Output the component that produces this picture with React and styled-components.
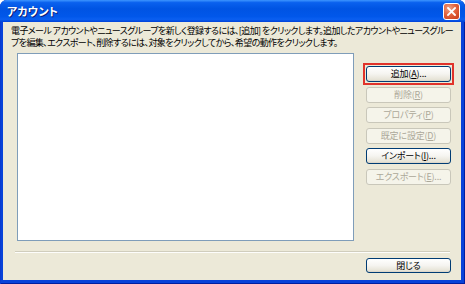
import React from 'react';
import styled, { createGlobalStyle, css } from 'styled-components';

const GlobalStyle = createGlobalStyle`
    html, body {
        margin: 0;
        padding: 0;
        background: #ffffff;
    }
    body {
        font-family: "Noto Sans CJK JP", "Noto Sans", sans-serif;
        font-feature-settings: "palt";
    }
`;

const Window = styled.div`
    width: 465px;
    height: 284px;
    box-sizing: border-box;
    display: flex;
    flex-direction: column;
    background: #0842d9;
    border-radius: 7px 7px 0 0;
    overflow: hidden;
    padding: 0 4px 4px 3px;
    box-shadow: inset 1px 0 0 #0a3bd0, inset -1px 0 0 #001ea0, inset 0 -1px 0 #001ea0;
`;

const TitleBar = styled.div`
    height: 22px;
    margin: 0 -4px 0 -3px;
    padding: 0 5px 0 7px;
    display: flex;
    align-items: center;
    justify-content: space-between;
    background: linear-gradient(to bottom, #3d95ff 0%, #0a61ee 12%, #0054e3 40%, #0157ea 75%, #0a5ff0 88%, #0041d8 100%);
`;

const Title = styled.span`
    color: #fff;
    font-size: 11px;
    font-weight: bold;
    letter-spacing: 0.2px;
    text-shadow: 1px 1px 0 #0a1e78;
`;

const CloseButton = styled.div`
    width: 17px;
    height: 17px;
    margin-top: 1px;
    box-sizing: border-box;
    border: 1px solid #fff;
    border-radius: 3px;
    background: radial-gradient(circle at 35% 30%, #f0a286 0%, #e3643e 45%, #c83a17 100%);
    display: flex;
    align-items: center;
    justify-content: center;
`;

const Body = styled.div`
    flex: 1;
    display: flex;
    flex-direction: column;
    background: #ece9d8;
    padding: 3px 10px 0 8px;
`;

const Description = styled.p`
    margin: 0;
    font-size: 9px;
    line-height: 12px;
    white-space: nowrap;
    color: #000;
    letter-spacing: -0.6px;
`;

const MainRow = styled.div`
    display: flex;
    margin-top: 4px;
`;

const AccountList = styled.div`
    margin-left: 6px;
    width: 337px;
    height: 188px;
    box-sizing: border-box;
    background: #fff;
    border: 1px solid #7f9db9;
`;

const ButtonColumn = styled.div`
    margin-left: 12px;
    padding-top: 13px;
    display: flex;
    flex-direction: column;
    gap: 4.6px;
`;

const Highlight = styled.div`
    margin: -3px;
    padding: 1px;
    border: 2px solid #e0332b;
    display: flex;
`;

const Button = styled.button`
    width: 85px;
    height: 16px;
    box-sizing: border-box;
    padding: 0;
    font-family: inherit;
    font-feature-settings: "palt";
    font-size: 9px;
    line-height: 14px;
    letter-spacing: -0.2px;
    border-radius: 3px;
    border: 1px solid #003c74;
    color: #000;
    background: linear-gradient(to bottom, #ffffff 0%, #f5f4f0 50%, #e6e3d6 90%, #d6d0c5 100%);
    ${p => p.disabled && css`
        border-color: #c9c7ba;
        color: #aca899;
        background: #f5f4ea;
    `}
`;

const Separator = styled.div`
    margin: 10px 1px 0 4px;
    height: 0;
    border-top: 1px solid #d0cdbd;
    border-bottom: 1px solid #fdfdfb;
`;

const Footer = styled.div`
    display: flex;
    justify-content: flex-end;
    margin-top: 5px;
`;

const CloseDialogButton = styled(Button)`
    width: 85px;
    height: 15px;
    line-height: 13px;
`;

export default function App() {
    return (
        <>
            <GlobalStyle />
            <Window>
                <TitleBar>
                    <Title>アカウント</Title>
                    <CloseButton>
                        <svg width="9" height="9" viewBox="0 0 9 9">
                            <path d="M1 1 L8 8 M8 1 L1 8" stroke="#fff" strokeWidth="1.8" strokeLinecap="square" />
                        </svg>
                    </CloseButton>
                </TitleBar>
                <Body>
                    <Description>
                        電子メール アカウントやニュースグループを新しく登録するには、[追加] をクリックします。追加したアカウントやニュースグルー
                        <br />
                        プを編集、エクスポート、削除するには、対象をクリックしてから、希望の動作をクリックします。
                    </Description>
                    <MainRow>
                        <AccountList />
                        <ButtonColumn>
                            <Highlight>
                                <Button>追加(<u>A</u>)...</Button>
                            </Highlight>
                            <Button disabled>削除(<u>R</u>)</Button>
                            <Button disabled>プロパティ(<u>P</u>)</Button>
                            <Button disabled>既定に設定(<u>D</u>)</Button>
                            <Button>インポート(<u>I</u>)...</Button>
                            <Button disabled>エクスポート(<u>E</u>)...</Button>
                        </ButtonColumn>
                    </MainRow>
                    <Separator />
                    <Footer>
                        <CloseDialogButton>閉じる</CloseDialogButton>
                    </Footer>
                </Body>
            </Window>
        </>
    );
}
